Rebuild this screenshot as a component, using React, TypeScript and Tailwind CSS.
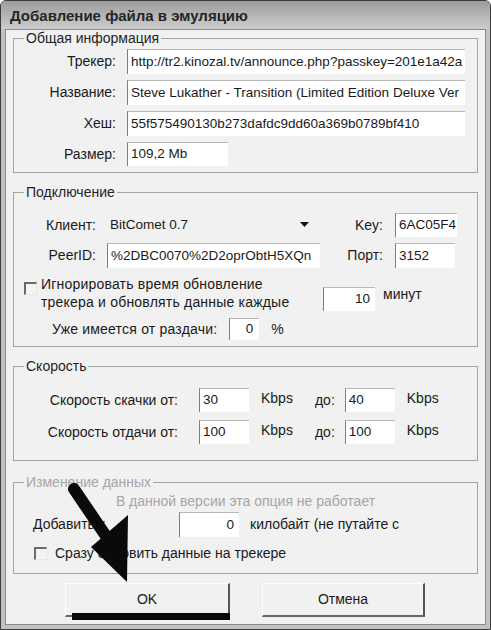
import React from 'react';

// Field is a sunken Win-style edit box
function Field({ value, className = '' }: { value: string; className?: string }) {
    return (
        <div
            className={`bg-white border-t border-l border-t-[#b8b8b8] border-l-[#7e7e7e] flex items-center px-[3px] text-[13.5px] text-[#1a1a1a] whitespace-nowrap overflow-hidden ${className}`}
        >
            {value}
        </div>
    );
}

function CheckBox() {
    return <div className="w-[13px] h-[13px] shrink-0 border-t-2 border-l-2 border-t-[#6a6a6a] border-l-[#6a6a6a] border-r border-b border-r-[#e6e6e6] border-b-[#e6e6e6] bg-[#f4f4f4]" />;
}

function Group({ title, disabled = false, className = '', children }: { title: string; disabled?: boolean; className?: string; children: React.ReactNode }) {
    return (
        <fieldset className={`mx-[7px] border border-[#a2a2a2] px-[10px] ${className}`}>
            <legend className={`px-[2px] text-[14px] leading-[16px] ${disabled ? 'text-[#a6a6a6]' : 'text-[#1f1f1f]'}`}>{title}</legend>
            {children}
        </fieldset>
    );
}

export default function App() {
    return (
        <div className="relative w-[491px] h-[630px] font-['Liberation_Sans',Arial,sans-serif] text-[14px] text-[#1a1a1a]">
            <div className="w-full h-full flex flex-col border border-[#3c3c3c] rounded-t-[6px] bg-[#c2c2c2] px-[4px] pb-[4px] overflow-hidden">
                <div className="h-[28px] -mx-[4px] px-[9px] pt-[2px] flex items-center bg-linear-to-b from-[#9c9c9c] to-[#cdcdcd]">
                    <span className="text-[15px] font-bold text-[#262626]">Добавление файла в эмуляцию</span>
                </div>
                <div className="flex-1 flex flex-col bg-[#f1f1f1] border border-[#8a8a8a]">
                    {/* Общая информация */}
                    <Group title="Общая информация" className="pb-[6px]">
                        <div className="mt-[3px] flex flex-col gap-[6px]">
                            {[
                                ['Трекер:', 'http://tr2.kinozal.tv/announce.php?passkey=201e1a42a'],
                                ['Название:', 'Steve Lukather - Transition (Limited Edition Deluxe Ver'],
                                ['Хеш:', '55f575490130b273dafdc9dd60a369b0789bf410'],
                            ].map(([label, value]) => (
                                <div key={label} className="flex items-center">
                                    <div className="w-[92px] text-right">{label}</div>
                                    <Field value={value} className="ml-[11px] w-[338px] h-[25px]" />
                                </div>
                            ))}
                            <div className="flex items-center">
                                <div className="w-[92px] text-right">Размер:</div>
                                <Field value="109,2 Mb" className="ml-[11px] w-[101px] h-[24px]" />
                            </div>
                        </div>
                    </Group>

                    {/* Подключение */}
                    <Group title="Подключение" className="mt-[11px] pb-[6px]">
                        <div className="mt-[13px] flex items-center h-[24px]">
                            <div className="w-[72px] text-right">Клиент:</div>
                            <div className="ml-[7px] w-[215px] h-[24px] flex items-center pl-[7px] pr-[5px] text-[13.5px]">
                                <span className="flex-1">BitComet 0.7</span>
                                <svg width="9" height="6" viewBox="0 0 9 6" className="mr-[4px]">
                                    <polygon points="0,0 9,0 4.5,5" fill="#111" />
                                </svg>
                            </div>
                            <div className="w-[65px] text-right">Key:</div>
                            <Field value="6AC05F4" className="ml-[12px] w-[62px] h-[24px]" />
                        </div>
                        <div className="mt-[6px] flex items-center">
                            <div className="w-[72px] text-right">PeerID:</div>
                            <Field value="%2DBC0070%2D2oprObtH5XQn" className="ml-[11px] w-[213px] h-[25px]" />
                            <div className="w-[63px] text-right">Порт:</div>
                            <Field value="3152" className="ml-[12px] w-[60px] h-[25px]" />
                        </div>
                        <div className="mt-[7px] flex items-end">
                            <div className="self-start mt-[7px]">
                                <CheckBox />
                            </div>
                            <div className="ml-[4px] w-[282px] leading-[18px] tracking-[0.2px]">
                                Игнорировать время обновление
                                <br />
                                трекера и обновлять данные каждые
                            </div>
                            <Field value="10" className="w-[52px] h-[24px] justify-end pr-[5px]" />
                            <div className="ml-[8px] mb-[6px]">минут</div>
                        </div>
                        <div className="mt-[7px] flex items-center">
                            <div className="ml-[28px] tracking-[0.2px]">Уже имеется от раздачи:</div>
                            <Field value="0" className="ml-[12px] w-[30px] h-[22px] justify-end pr-[6px]" />
                            <div className="ml-[12px]">%</div>
                        </div>
                    </Group>

                    {/* Скорость */}
                    <Group title="Скорость" className="mt-[11px] pb-[16px]">
                        <div className="mt-[14px] flex flex-col gap-[8px]">
                            {[
                                ['Скорость скачки от:', '30', '40'],
                                ['Скорость отдачи от:', '100', '100'],
                            ].map(([label, from, to]) => (
                                <div key={label} className="flex items-center">
                                    <div className="w-[154px] text-right">{label}</div>
                                    <Field value={from} className="ml-[21px] w-[50px] h-[24px]" />
                                    <div className="ml-[12px] -mt-[4px]">Kbps</div>
                                    <div className="ml-[22px]">до:</div>
                                    <Field value={to} className="ml-[10px] w-[50px] h-[24px]" />
                                    <div className="ml-[12px] -mt-[4px]">Kbps</div>
                                </div>
                            ))}
                        </div>
                    </Group>

                    {/* Изменение данных */}
                    <Group title="Изменение данных" disabled className="mt-[13px] pb-[12px]">
                        <div className="mt-[3px] text-center leading-[16px] text-[#a6a6a6]">В данной версии эта опция не работает</div>
                        <div className="mt-[3px] flex items-center">
                            <div className="ml-[9px] w-[146px]">Добавить к</div>
                            <Field value="0" className="w-[60px] h-[25px] justify-end pr-[5px]" />
                            <div className="ml-[11px]">килобайт (не путайте с</div>
                        </div>
                        <div className="mt-[8px] flex items-center h-[16px]">
                            <div className="ml-[10px]">
                                <CheckBox />
                            </div>
                            <div className="ml-[8px]">Сразу обновить данные на трекере</div>
                        </div>
                    </Group>

                    <div className="mt-[9px] flex">
                        <button className="ml-[59px] w-[165px] h-[34px] bg-[#f1f1f1] border-t border-l border-t-white border-l-white border-r-2 border-b-2 border-r-[#555] border-b-[#666] text-[14px]">
                            OK
                        </button>
                        <button className="ml-[32px] w-[163px] h-[34px] bg-[#f1f1f1] border-t border-l border-t-white border-l-white border-r-2 border-b-2 border-r-[#555] border-b-[#666] text-[14px]">
                            Отмена
                        </button>
                    </div>
                </div>
            </div>

            {/* annotation arrow drawn over the dialog */}
            <svg className="absolute inset-0 pointer-events-none" width="491" height="630" viewBox="0 0 491 630">
                <line x1="74" y1="489" x2="110" y2="542" stroke="#0a0a0a" strokeWidth="12" strokeLinecap="round" />
                <polygon points="91,547 128,515 127,582" fill="#0a0a0a" />
                <rect x="72" y="613" width="158" height="7" fill="#0a0a0a" />
            </svg>
        </div>
    );
}
